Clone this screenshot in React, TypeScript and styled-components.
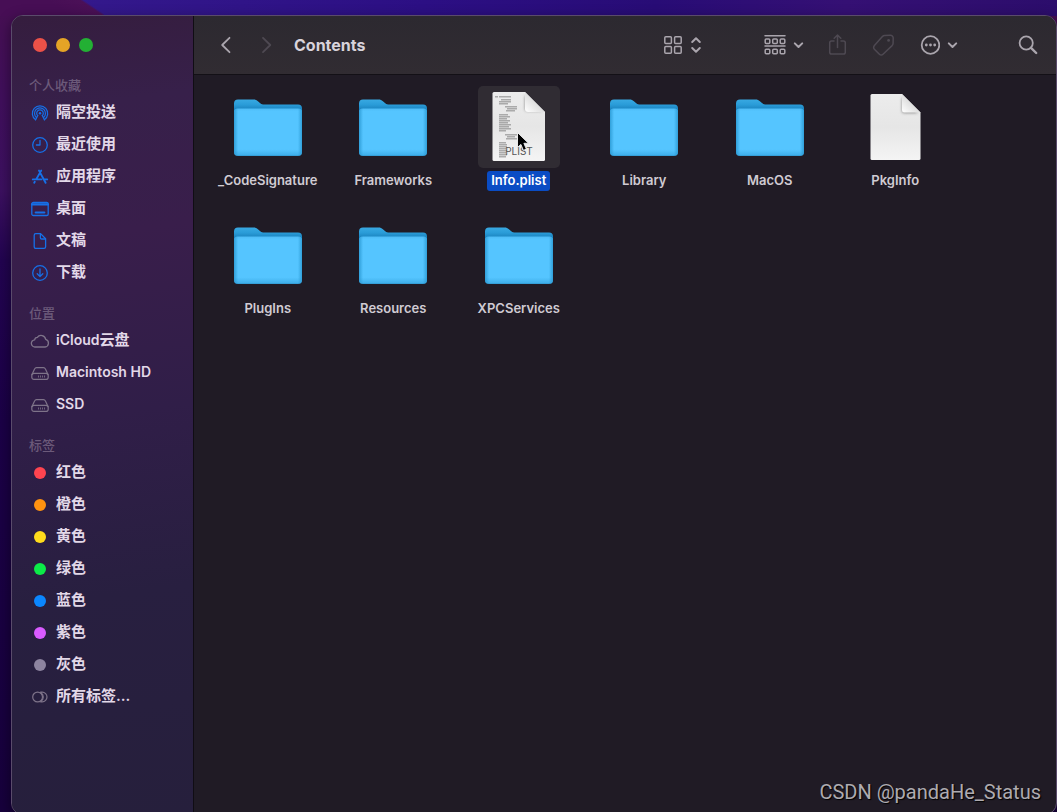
import React from "react";
import styled, { createGlobalStyle } from "styled-components";

const GlobalStyle = createGlobalStyle`
  *, *::before, *::after { box-sizing: border-box; }
  html, body { margin: 0; background: #1b0147; }
  body {
    overflow: hidden;
    font-family: Inter, "Noto Sans CJK SC", sans-serif;
    -webkit-font-smoothing: antialiased;
  }
  button { margin: 0; padding: 0; border: 0; background: none; color: inherit; font: inherit; }
  h1, h2, ul { margin: 0; padding: 0; font: inherit; list-style: none; }
  svg { display: block; flex: none; }
`;

const Desktop = styled.main`
  position: relative;
  min-height: 100vh;
  padding: 15px 0 0 11px;
  overflow: hidden;
  background:
    linear-gradient(34deg, #470e55 40px, #4b1057 58px, transparent 60px) 0 0 / 104px 16px no-repeat,
    linear-gradient(90deg, #34198c 60px, #2c0f84 40%, #280c76 62%, #351074 80%, #2c0d6c) 0 0 / 100% 16px no-repeat,
    linear-gradient(#470f52, #400f5c 100px, #3c1060 190px, #220450 260px, #1b0147 420px, #17003c);
`;

const Window = styled.div`
  display: grid;
  grid-template-columns: 182px minmax(0, 1fr);
  min-height: calc(100vh - 12px);
  border: 1px solid #5a4b6b;
  border-radius: 12px;
  overflow: hidden;
  background: #201b25;
  box-shadow: 0 4px 14px rgba(0, 0, 0, 0.45);
`;

const Sidebar = styled.aside`
  border-right: 1px solid #100d14;
  background: linear-gradient(172deg, #351d3e, #37204a 12%, #391e4b 28%, #301e48 50%, #281f40 72%, #261f3c);
`;

const WindowControls = styled.div`
  display: flex;
  align-items: center;
  gap: 9px;
  height: 59px;
  padding: 0 0 2px 21px;
`;

const ControlDot = styled.button<{ $color: string }>`
  width: 14px;
  height: 14px;
  border-radius: 50%;
  background: ${(p) => p.$color};
`;

const Section = styled.section`
  margin-bottom: 14px;
`;

const SectionTitle = styled.h2`
  height: 22px;
  padding-left: 17px;
  color: #6c5a7a;
  font-size: 13px;
  font-weight: 500;
  line-height: 21px;
`;

const PlaceRow = styled.button<{ $tint: string }>`
  display: flex;
  align-items: center;
  gap: 6px;
  width: 100%;
  height: 32px;
  padding: 0 0 1px 18px;
  color: #e2d8e8;
  text-align: left;
  white-space: nowrap;
  svg { color: ${(p) => p.$tint}; }
`;

const PlaceName = styled.span`
  height: 22px;
  font-size: 15px;
  font-weight: 600;
  line-height: 20px;
`;

const LatinText = styled.span`
  font-size: 14px;
`;

const TagSlot = styled.span`
  display: grid;
  place-items: center;
  width: 20px;
`;

const TagDot = styled.span<{ $color: string }>`
  width: 12px;
  height: 12px;
  border-radius: 50%;
  background: ${(p) => p.$color};
`;

const Pane = styled.div`
  display: flex;
  flex-direction: column;
  min-width: 0;
`;

const Toolbar = styled.header`
  display: flex;
  align-items: center;
  height: 59px;
  padding: 0 18px 0 22px;
  border-bottom: 1px solid #131016;
  background: linear-gradient(#2c2930, #312c32);
`;

const NavButtons = styled.div`
  display: flex;
  gap: 20px;
`;

const Title = styled.h1`
  flex: 1;
  padding-left: 18px;
  color: #d8d3db;
  font-size: 16px;
  font-weight: 700;
`;

const Tools = styled.div`
  display: flex;
  gap: 60px;
`;

const ToolGroup = styled.div`
  display: flex;
  gap: 24px;
`;

const ToolButton = styled.button<{ $dim?: boolean }>`
  display: flex;
  align-items: center;
  gap: 7px;
  color: ${(p) => (p.$dim ? "#4e4952" : "#aaa5ad")};
`;

const FileGrid = styled.ul`
  display: grid;
  grid-template-columns: repeat(auto-fill, minmax(120px, 1fr));
  row-gap: 23px;
  padding: 11px 98px 24px 11px;
`;

const FileButton = styled.button`
  display: flex;
  flex-direction: column;
  align-items: center;
  gap: 3px;
  width: 100%;
`;

const Thumb = styled.span<{ $selected?: boolean }>`
  position: relative;
  width: 82px;
  height: 82px;
  border-radius: 5px;
  background: ${(p) => (p.$selected ? "#302c33" : "transparent")};
`;

const FileName = styled.span<{ $selected?: boolean }>`
  height: 20px;
  padding: 0 4px;
  border-radius: 3px;
  background: ${(p) => (p.$selected ? "#0a4cc4" : "transparent")};
  color: ${(p) => (p.$selected ? "#ffffff" : "#d0cbd3")};
  font-size: 13px;
  font-weight: 600;
  line-height: 18px;
  white-space: nowrap;
`;

const Pointer = styled.svg`
  position: absolute;
  left: 38px;
  top: 45px;
`;

const Watermark = styled.p`
  position: absolute;
  right: 16px;
  bottom: 10px;
  margin: 0;
  color: #aeabb0;
  font-family: Roboto, sans-serif;
  font-size: 20px;
  line-height: 26px;
  text-shadow: 1px 1px 1px #000;
`;

type IconProps = { children: React.ReactNode; w?: number; h?: number; sw?: number };
const Icon = ({ children, w = 20, h = 20, sw = 1.3 }: IconProps) => (
  <svg width={w} height={h} viewBox={`0 0 ${w} ${h}`} fill="none" stroke="currentColor"
    strokeWidth={sw} strokeLinecap="round" strokeLinejoin="round" aria-hidden="true">
    {children}
  </svg>
);

const AirDropIcon = () => (
  <Icon sw={1.2}>
    <path d="M5.600 16.800a7.700 7.700 0 1 1 8.800 0M6.600 14.700a5.500 5.500 0 1 1 6.800 0M7.700 12.600a3.300 3.300 0 1 1 4.600 0" />
    <path d="M5.600 16.800l2.100-4.200M14.400 16.800l-2.100-4.200" />
    <circle cx="10" cy="10.200" r="1.200" fill="currentColor" stroke="none" />
  </Icon>
);
const ClockIcon = () => (
  <Icon><circle cx="10" cy="10" r="7.3" /><path d="M10 5.4V10H6.4" /></Icon>
);
const AppsIcon = () => (
  <Icon sw={1.9}>
    <path d="M9 3.6l6.600 12.200M11.200 3.600L6.400 12M4.800 14.800l-.6 1M2.800 12.400h8.600M14.200 12.400h3" />
  </Icon>
);
const DesktopIcon = () => (
  <Icon>
    <rect x="1.8" y="3.5" width="16.4" height="13" rx="1.6" />
    <path d="M2 5.4h16" strokeWidth="2.2" /><path d="M5.6 13.6h8.8" strokeWidth="2" />
  </Icon>
);
const DocIcon = () => (
  <Icon>
    <path d="M5.800 2.600h4.800l5 5.200v8a1.600 1.600 0 0 1-1.600 1.600H5.800a1.600 1.600 0 0 1-1.600-1.600V4.200a1.600 1.600 0 0 1 1.600-1.600z" />
    <path d="M10.400 2.800v4a1.200 1.200 0 0 0 1.200 1.200h3.800" />
  </Icon>
);
const DownloadIcon = () => (
  <Icon><circle cx="10" cy="10" r="7.3" /><path d="M10 6v7.400M7.200 10.800l2.800 2.800 2.800-2.800" /></Icon>
);
const CloudIcon = () => (
  <Icon><path d="M5.200 16a3.600 3.600 0 0 1-.5-7.200 2.800 2.800 0 0 1 2.600-2.500 4.700 4.700 0 0 1 8.400 2.100A3.900 3.900 0 0 1 15 16z" /></Icon>
);
const DriveIcon = () => (
  <Icon sw={1.2}>
    <path d="M2 11.600l2.700-5.800a2 2 0 0 1 1.800-1.200h7a2 2 0 0 1 1.800 1.200l2.700 5.800" />
    <rect x="1.8" y="10.4" width="16.4" height="6" rx="2.2" />
    <path d="M8 13.600h6.800" strokeDasharray="0.8 1.2" strokeWidth="2" strokeLinecap="butt" />
  </Icon>
);
const AllTagsIcon = () => (
  <Icon sw={1.2}>
    <circle cx="7.6" cy="10" r="4.9" />
    <path d="M10.600 5.200h1.600a4.800 4.800 0 0 1 0 9.600h-1.600M10.900 5.800a4.900 4.900 0 0 1 0 8.400" />
  </Icon>
);
const ChevronDown = () => (
  <Icon w={11} sw={2}><path d="M1.800 8.400l3.700 3.600 3.700-3.600" /></Icon>
);

const FolderArt = () => (
  <svg width="82" height="82" viewBox="0 0 82 82" aria-hidden="true">
    <defs>
      <linearGradient id="folderBack" x1="0" y1="0" x2="0" y2="1">
        <stop offset="0" stopColor="#38a9e2" /><stop offset="0.1" stopColor="#2a9cd8" /><stop offset="0.18" stopColor="#1c86c2" /><stop offset="1" stopColor="#1c86c2" />
      </linearGradient>
      <linearGradient id="folderFront" x1="0" y1="0" x2="0" y2="1">
        <stop offset="0" stopColor="#4ebcf6" /><stop offset="0.06" stopColor="#55c5ff" />
        <stop offset="0.86" stopColor="#55c5ff" /><stop offset="0.97" stopColor="#41b1ec" /><stop offset="1" stopColor="#2f97cf" />
      </linearGradient>
      <linearGradient id="folderSides">
        <stop offset="0" stopColor="#2796d0" stopOpacity="0.8" /><stop offset="0.06" stopColor="#2796d0" stopOpacity="0" />
        <stop offset="0.94" stopColor="#2796d0" stopOpacity="0" /><stop offset="1" stopColor="#2796d0" stopOpacity="0.8" />
      </linearGradient>
    </defs>
    <path d="M7 17.500a4 4 0 0 1 4-4h15.500c2 0 3 .6 4.400 1.800l2.400 2c1.200 1 2.200 1.300 4 1.300H71a4 4 0 0 1 4 4V66H7z" fill="url(#folderBack)" />
    <path d="M7 26.500a4 4 0 0 1 4-4h60a4 4 0 0 1 4 4V66a4 4 0 0 1-4 4H11a4 4 0 0 1-4-4z" fill="url(#folderFront)" />
    <path d="M7 26.500a4 4 0 0 1 4-4h60a4 4 0 0 1 4 4V66a4 4 0 0 1-4 4H11a4 4 0 0 1-4-4z" fill="url(#folderSides)" />
  </svg>
);

const PageDefs = () => (
  <defs>
    <linearGradient id="page" x1="0" y1="0" x2="0" y2="1">
      <stop offset="0" stopColor="#ececec" /><stop offset="0.5" stopColor="#e6e6e6" /><stop offset="1" stopColor="#f4f4f4" />
    </linearGradient>
    <linearGradient id="fold" x1="0" y1="1" x2="1" y2="0">
      <stop offset="0" stopColor="#ffffff" /><stop offset="0.5" stopColor="#dedede" /><stop offset="1" stopColor="#c6c6c6" />
    </linearGradient>
    <filter id="foldShade" x="-40%" y="-40%" width="180%" height="180%"><feGaussianBlur stdDeviation="1.5" /></filter>
  </defs>
);

const PageArt = () => (
  <svg width="82" height="82" viewBox="0 0 82 82" aria-hidden="true">
    <PageDefs />
    <path d="M18 8h30l18.500 18.500V72.500a1.500 1.500 0 0 1-1.500 1.500H18a1.500 1.500 0 0 1-1.500-1.500v-63A1.500 1.500 0 0 1 18 8z" fill="url(#page)" />
    <path d="M48 11v14a2 2 0 0 0 2 2h14z" fill="#707070" opacity="0.8" filter="url(#foldShade)" />
    <path d="M48 8v16a2.500 2.500 0 0 0 2.500 2.500h16z" fill="url(#fold)" />
  </svg>
);

const listing = [
  [17, 10, 3], [21, 10, 12], [23, 13, 10], [21, 15, 12], [21, 17, 9], [27, 20, 12], [29, 22, 10], [28, 24, 9],
  [21, 28, 9], [21, 30, 11], [21, 32, 8], [21, 34, 11], [21, 36, 9], [21, 38, 12], [21, 40, 10], [21, 42, 12], [21, 44, 7],
  [27, 48, 12], [29, 50, 8], [28, 52, 11],
  [21, 56, 7], [21, 58, 8], [21, 60, 8], [21, 62, 7], [21, 64, 8], [21, 66, 7], [21, 68, 8], [21, 70, 7],
];

const PlistArt = () => (
  <svg width="82" height="82" viewBox="0 0 82 82" aria-hidden="true">
    <PageDefs />
    <path d="M16 6h31l20 20v47.500a1.500 1.500 0 0 1-1.500 1.500H16a1.500 1.500 0 0 1-1.500-1.500v-66A1.500 1.500 0 0 1 16 6z" fill="url(#page)" />
    {listing.map(([x, y, w]) => (
      <rect key={`${x}-${y}`} x={x} y={y} width={w} height="1.5" fill="#9a9a9a" opacity="0.8" />
    ))}
    <path d="M47 9v14a2 2 0 0 0 2 2h15z" fill="#707070" opacity="0.8" filter="url(#foldShade)" />
    <path d="M47 6v17a3 3 0 0 0 3 3h17z" fill="url(#fold)" />
    <text x="41" y="69" textAnchor="middle" fontSize="10" fill="#555">PLIST</text>
  </svg>
);

type Place = { name: string; latin?: string; icon: React.ReactNode };
const blue = "#1670e8";
const gray = "#7e7389";

const favorites: Place[] = [
  { name: "隔空投送", icon: <AirDropIcon /> },
  { name: "最近使用", icon: <ClockIcon /> },
  { name: "应用程序", icon: <AppsIcon /> },
  { name: "桌面", icon: <DesktopIcon /> },
  { name: "文稿", icon: <DocIcon /> },
  { name: "下载", icon: <DownloadIcon /> },
];
const locations: Place[] = [
  { latin: "iCloud", name: "云盘", icon: <CloudIcon /> },
  { latin: "Macintosh HD", name: "", icon: <DriveIcon /> },
  { latin: "SSD", name: "", icon: <DriveIcon /> },
];
const dot = (color: string) => <TagSlot><TagDot $color={color} /></TagSlot>;
const tags: Place[] = [
  { name: "红色", icon: dot("#ff4450") },
  { name: "橙色", icon: dot("#ff9210") },
  { name: "黄色", icon: dot("#ffdc1c") },
  { name: "绿色", icon: dot("#0cea48") },
  { name: "蓝色", icon: dot("#0b86ff") },
  { name: "紫色", icon: dot("#d95bff") },
  { name: "灰色", icon: dot("#8d84a0") },
  { name: "所有标签...", icon: <AllTagsIcon /> },
];

const PlaceSection = ({ title, places, tint }: { title: string; places: Place[]; tint: string }) => (
  <Section>
    <SectionTitle>{title}</SectionTitle>
    <ul>
      {places.map((p) => (
        <li key={p.name + p.latin}>
          <PlaceRow $tint={tint}>
            {p.icon}
            <PlaceName>{p.latin && <LatinText>{p.latin}</LatinText>}{p.name}</PlaceName>
          </PlaceRow>
        </li>
      ))}
    </ul>
  </Section>
);

const files: { name: string; kind: "folder" | "page" | "plist" }[] = [
  { name: "_CodeSignature", kind: "folder" },
  { name: "Frameworks", kind: "folder" },
  { name: "Info.plist", kind: "plist" },
  { name: "Library", kind: "folder" },
  { name: "MacOS", kind: "folder" },
  { name: "PkgInfo", kind: "page" },
  { name: "PlugIns", kind: "folder" },
  { name: "Resources", kind: "folder" },
  { name: "XPCServices", kind: "folder" },
];
const art = { folder: <FolderArt />, page: <PageArt />, plist: <PlistArt /> };

export default function App() {
  return (
    <Desktop>
      <GlobalStyle />
      <Window>
        <Sidebar>
          <WindowControls>
            <ControlDot $color="#ec5148" aria-label="关闭" />
            <ControlDot $color="#e5a426" aria-label="最小化" />
            <ControlDot $color="#23b034" aria-label="缩放" />
          </WindowControls>
          <PlaceSection title="个人收藏" places={favorites} tint={blue} />
          <PlaceSection title="位置" places={locations} tint={gray} />
          <PlaceSection title="标签" places={tags} tint={gray} />
        </Sidebar>
        <Pane>
          <Toolbar>
            <NavButtons>
              <ToolButton aria-label="后退"><Icon sw={1.8}><path d="M13.500 2.800L6.200 10l7.300 7.200" /></Icon></ToolButton>
              <ToolButton $dim aria-label="前进"><Icon sw={1.8}><path d="M7 2.800l7.300 7.200L7 17.200" /></Icon></ToolButton>
            </NavButtons>
            <Title>Contents</Title>
            <Tools>
              <ToolButton aria-label="显示方式">
                <Icon sw={1.5}>
                  <rect x="1.8" y="1.8" width="6.6" height="6.6" rx="1" /><rect x="11.6" y="1.8" width="6.6" height="6.6" rx="1" />
                  <rect x="1.8" y="11.6" width="6.6" height="6.6" rx="1" /><rect x="11.6" y="11.6" width="6.6" height="6.6" rx="1" />
                </Icon>
                <Icon w={14} sw={2}><path d="M2.200 7L6 3.200 9.800 7M2.200 13L6 16.800 9.800 13" /></Icon>
              </ToolButton>
              <ToolGroup>
                <ToolButton aria-label="群组">
                  <Icon w={22} sw={1.5}>
                    <path d="M1 .8h20M1 11h20" />
                    <rect x="1.2" y="4" width="4.6" height="4.4" rx="1" /><rect x="8.7" y="4" width="4.6" height="4.4" rx="1" /><rect x="16.2" y="4" width="4.6" height="4.4" rx="1" />
                    <rect x="1.2" y="14.2" width="4.6" height="4.6" rx="1" /><rect x="8.7" y="14.2" width="4.6" height="4.6" rx="1" /><rect x="16.2" y="14.2" width="4.6" height="4.6" rx="1" />
                  </Icon>
                  <ChevronDown />
                </ToolButton>
                <ToolButton $dim aria-label="共享">
                  <Icon h={22} sw={1.5}>
                    <path d="M6 7H3.500A1.800 1.800 0 0 0 1.700 8.800v9.400A1.800 1.800 0 0 0 3.500 20h12a1.800 1.800 0 0 0 1.800-1.800V8.800A1.800 1.800 0 0 0 15.500 7H13" />
                    <path d="M9.500 13.600V1.200M6.200 4.200l3.300-3.200 3.300 3.200" />
                  </Icon>
                </ToolButton>
                <ToolButton $dim aria-label="标签">
                  <Icon w={24} h={24} sw={1.5}>
                    <path d="M12.600 2.600l5.600-.4a2.800 2.800 0 0 1 3 2.800l-.1 5.200a3.600 3.600 0 0 1-1 2.400L11 21.200a2.500 2.500 0 0 1-3.600 0l-5-5a2.500 2.500 0 0 1 0-3.600l8-9a3.400 3.400 0 0 1 2.200-1z" />
                    <circle cx="16.6" cy="7.4" r="1.4" fill="currentColor" stroke="none" />
                  </Icon>
                </ToolButton>
                <ToolButton aria-label="操作">
                  <Icon sw={1.8}>
                    <circle cx="10.5" cy="10" r="8.8" />
                    <g fill="currentColor" stroke="none"><circle cx="6.3" cy="10" r="1.4" /><circle cx="10.5" cy="10" r="1.4" /><circle cx="14.7" cy="10" r="1.4" /></g>
                  </Icon>
                  <ChevronDown />
                </ToolButton>
              </ToolGroup>
              <ToolButton aria-label="搜索">
                <Icon sw={1.8}><circle cx="8.2" cy="8" r="6.6" /><path d="M13 12.800l5.200 5.200" strokeWidth="2.400" /></Icon>
              </ToolButton>
            </Tools>
          </Toolbar>
          <FileGrid>
            {files.map(({ name, kind }) => {
              const selected = kind === "plist";
              return (
                <li key={name}>
                  <FileButton aria-pressed={selected}>
                    <Thumb $selected={selected}>
                      {art[kind]}
                      {selected && (
                        <Pointer width="14" height="22" viewBox="0 0 14 22" aria-hidden="true">
                          <path d="M1.500 1.500v15l3.400-3.100 2.500 6 3-1.300-2.500-5.800h4.600z" fill="#000" stroke="#e8e8e8" strokeWidth="1" strokeLinejoin="round" />
                        </Pointer>
                      )}
                    </Thumb>
                    <FileName $selected={selected}>{name}</FileName>
                  </FileButton>
                </li>
              );
            })}
          </FileGrid>
        </Pane>
      </Window>
      <Watermark>CSDN @pandaHe_Status</Watermark>
    </Desktop>
  );
}
